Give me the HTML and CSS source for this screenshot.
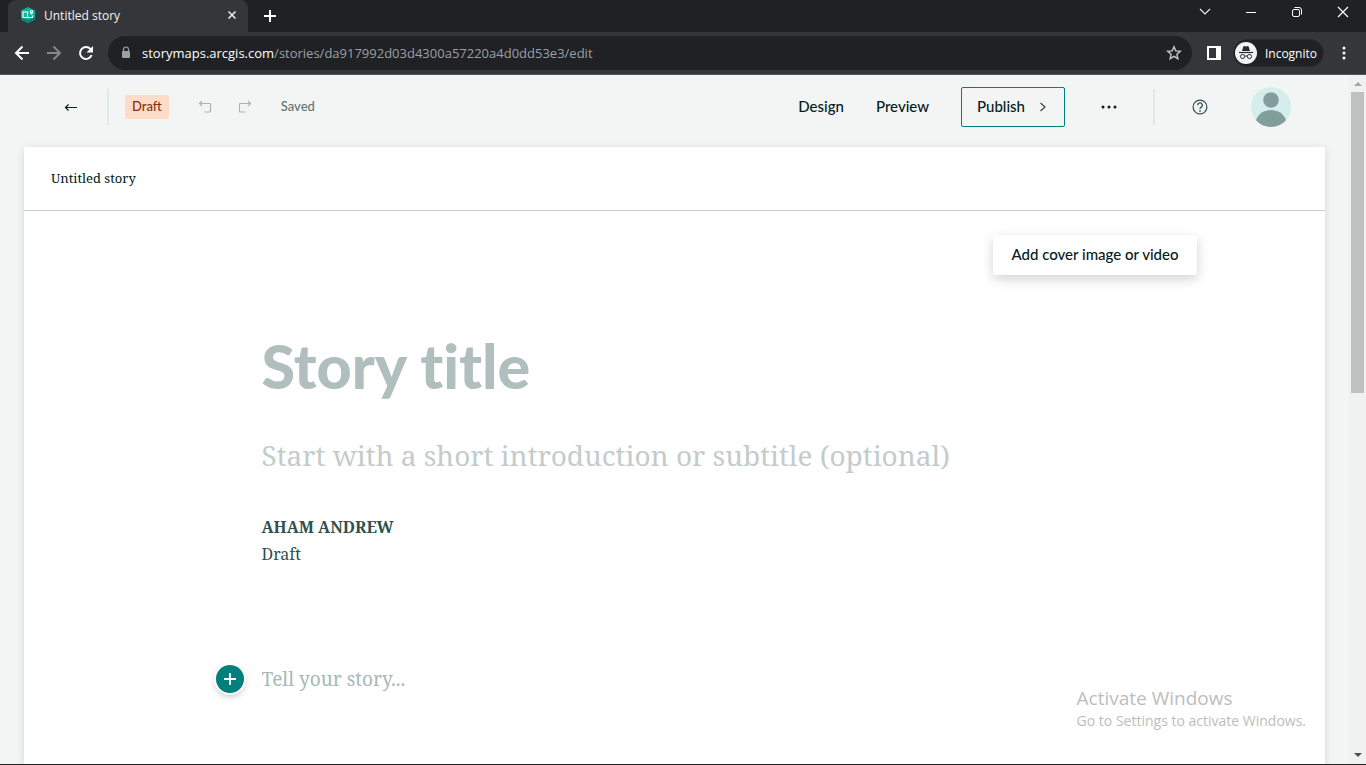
FILE: index.html
```html
<!DOCTYPE html>
<html lang="en">
<head>
<meta charset="utf-8">
<title>Untitled story</title>
<link rel="stylesheet" href="styles.css">
</head>
<body>
<div class="browser">
  <div class="tabstrip">
    <div class="tab">
      <svg class="favicon" width="16" height="16" viewBox="0 0 16 16"><path d="M8 0l7 3.500v9L8 16l-7-3.500v-9z" fill="#10b39e"/><path d="M1 10l7 3 7-3v2.500L8 16l-7-3.500z" fill="#078575"/><path d="M8.500 5H3v5.500h9.500V8.500M7.500 5v5.500" fill="none" stroke="#fff" stroke-width="1.100"/><path d="M11.500 3a1.700 1.700 0 0 1 1.700 1.700c0 1.200-1.700 3-1.700 3s-1.700-1.800-1.700-3A1.700 1.700 0 0 1 11.500 3z" fill="#fff"/><circle cx="11.500" cy="4.700" r=".6" fill="#10b39e"/></svg>
      <span class="tab-name">Untitled story</span>
      <button class="icon-btn tab-close" aria-label="Close tab"><svg width="10" height="10" viewBox="0 0 10 10"><path d="M1.500 1.500l7 7m0-7l-7 7" stroke="#e8eaed" stroke-width="1.600"/></svg></button>
    </div>
    <button class="icon-btn new-tab" aria-label="New tab"><svg width="12" height="12" viewBox="0 0 12 12"><path d="M6 0v12M0 6h12" stroke="#fff" stroke-width="2"/></svg></button>
    <div class="window-controls">
      <button class="icon-btn" aria-label="Search tabs"><svg width="12" height="12" viewBox="0 0 12 12"><path d="M1 3l5 5 5-5" fill="none" stroke="#e8eaed" stroke-width="1.200"/></svg></button>
      <button class="icon-btn" aria-label="Minimize"><svg width="12" height="12" viewBox="0 0 12 12"><path d="M1 6.500h10" stroke="#fff"/></svg></button>
      <button class="icon-btn" aria-label="Restore"><svg width="12" height="12" viewBox="0 0 12 12"><rect x="1.500" y="3.500" width="7" height="7" rx="1.500" fill="none" stroke="#fff"/><path d="M3.500 1.500H8a2.500 2.500 0 0 1 2.500 2.500v4.500" fill="none" stroke="#fff"/></svg></button>
      <button class="icon-btn" aria-label="Close"><svg width="12" height="12" viewBox="0 0 12 12"><path d="M1 1l10 10m0-10L1 11" stroke="#fff" stroke-width="1.200"/></svg></button>
    </div>
  </div>
  <div class="toolbar">
    <button class="icon-btn nav-btn" aria-label="Back"><svg width="16" height="16" viewBox="0 0 16 16"><path d="M15 8H2m6.500-6.500L2 8l6.500 6.500" fill="none" stroke="#fff" stroke-width="2"/></svg></button>
    <button class="icon-btn nav-btn" aria-label="Forward"><svg width="16" height="16" viewBox="0 0 16 16"><path d="M1 8h13M7.500 1.500L14 8l-6.500 6.500" fill="none" stroke="#85868a" stroke-width="2"/></svg></button>
    <button class="icon-btn nav-btn" aria-label="Reload"><svg width="16" height="16" viewBox="0 0 16 16"><path d="M13.600 10.200A6 6 0 1 1 12.400 3.900L14 5.500" fill="none" stroke="#fff" stroke-width="2"/><path d="M15 1v6.500H8.500z" fill="#fff"/></svg></button>
    <div class="address">
      <svg width="12" height="14" viewBox="0 0 12 14"><rect x="2" y="5" width="8" height="7" rx="1" fill="#9aa0a6"/><path d="M3.500 5.500V3.500a2.500 2.500 0 0 1 5 0v2" fill="none" stroke="#9aa0a6" stroke-width="1.200"/></svg>
      <span class="url" role="textbox" aria-label="Address"><span class="url-host">storymaps.arcgis.com</span>/stories/da917992d03d4300a57220a4d0dd53e3/edit</span>
      <button class="icon-btn" aria-label="Bookmark"><svg width="16" height="16" viewBox="0 0 16 16"><path d="M8 1.800l1.800 4.100 4.500.4-3.400 3 1 4.400L8 11.400l-3.900 2.300 1-4.400-3.400-3 4.500-.4z" fill="none" stroke="#c4c7ca" stroke-width="1.400"/></svg></button>
    </div>
    <button class="icon-btn panel-btn" aria-label="Side panel"><svg width="14" height="14" viewBox="0 0 14 14"><path fill-rule="evenodd" d="M0 0h14v14H0zM2 2v10h7V2z" fill="#fff"/></svg></button>
    <button class="incognito"><svg width="22" height="22" viewBox="0 0 22 22"><circle cx="11" cy="11" r="11" fill="#f1f3f4"/><path d="M7 9l1.400-4.600q.2-.6.800-.4l1.800.5 1.800-.5q.6-.2.800.4L15 9z" fill="#292a2d"/><path d="M4 10.500h14" stroke="#292a2d" stroke-width="1.200"/><circle cx="7.600" cy="14.500" r="2.100" fill="none" stroke="#292a2d"/><circle cx="14.400" cy="14.500" r="2.100" fill="none" stroke="#292a2d"/><path d="M9.700 14.300q1.300-.8 2.600 0" fill="none" stroke="#292a2d"/></svg><span>Incognito</span></button>
    <button class="icon-btn menu-btn" aria-label="Menu"><svg width="4" height="14" viewBox="0 0 4 14" fill="#fff"><circle cx="2" cy="2" r="1.500"/><circle cx="2" cy="7" r="1.500"/><circle cx="2" cy="12" r="1.500"/></svg></button>
  </div>
  <div class="viewport">
    <main class="page">
      <header class="editor-bar">
        <a class="back" href="#" aria-label="Back to stories"><svg width="14" height="8" viewBox="0 0 14 8"><path d="M13 4.500H2" stroke="#022020"/><path d="M4.500 1.500L1.500 4.500l3 3" fill="none" stroke="#022020" stroke-width="1.200"/></svg></a>
        <div class="status">
          <span class="badge">Draft</span>
          <button class="icon-btn" aria-label="Undo"><svg width="14" height="14" viewBox="0 0 14 14"><path d="M4 1L1.500 3.500 4 6M1.500 3.500H12a.5.5 0 0 1 .5.5v7a1 1 0 0 1-1 1H6.500" fill="none" stroke="#a3b8b6" stroke-width="1.200"/></svg></button>
          <button class="icon-btn" aria-label="Redo"><svg width="14" height="14" viewBox="0 0 14 14"><path d="M10 1l2.500 2.500L10 6M12.500 3.500H2a.5.5 0 0 0-.5.5v7a1 1 0 0 0 1 1H7.500" fill="none" stroke="#a3b8b6" stroke-width="1.200"/></svg></button>
          <span class="saved">Saved</span>
        </div>
        <div class="actions">
          <button class="text-btn">Design</button>
          <button class="text-btn">Preview</button>
          <button class="publish"><span class="text-btn">Publish</span><svg width="8" height="10" viewBox="0 0 8 10"><path d="M1.500 1L6 5 1.500 9" fill="none" stroke="#304f4e" stroke-width="1.300"/></svg></button>
          <button class="icon-btn more" aria-label="More actions"><svg width="16" height="4" viewBox="0 0 16 4" fill="#022020"><circle cx="2" cy="2" r="1.500"/><circle cx="8" cy="2" r="1.500"/><circle cx="14" cy="2" r="1.500"/></svg></button>
        </div>
        <div class="account">
          <button class="icon-btn" aria-label="Help"><svg width="16" height="16" viewBox="0 0 16 16"><circle cx="8" cy="8" r="6.900" fill="none" stroke="#304f4e" stroke-width="1.200"/><path d="M5.700 6.300a2.300 2.300 0 1 1 3.300 2.000Q8 8.800 8 9.900" fill="none" stroke="#304f4e" stroke-width="1.300"/><circle cx="8" cy="11.900" r=".9" fill="#304f4e"/></svg></button>
          <button class="icon-btn" aria-label="Profile"><svg width="40" height="40" viewBox="0 0 40 40"><circle cx="20" cy="20" r="20" fill="#d5eeed"/><circle cx="20" cy="13" r="7.800" fill="#829e9c"/><path d="M5 33.200C7.500 26.500 13 23 20 23s12.500 3.500 15 10.200A20 20 0 0 1 5 33.200z" fill="#829e9c"/></svg></button>
        </div>
      </header>
      <article class="sheet">
        <div class="sheet-head">Untitled story</div>
        <div class="cover-row"><button class="cover-btn">Add cover image or video</button></div>
        <div class="story">
          <input class="field title" aria-label="Story title" placeholder="Story title">
          <input class="field subtitle" aria-label="Subtitle" placeholder="Start with a short introduction or subtitle (optional)">
          <div class="byline"><strong>AHAM ANDREW</strong><span>Draft</span></div>
          <div class="block">
            <button class="add" aria-label="Add content block"><svg width="12" height="12" viewBox="0 0 12 12"><path d="M6 0v12M0 6h12" stroke="#fff" stroke-width="1.800"/></svg></button>
            <input class="field body" aria-label="Story text" placeholder="Tell your story...">
          </div>
        </div>
      </article>
    </main>
    <div class="scrollbar">
      <svg width="8" height="4" viewBox="0 0 8 4"><path d="M4 0l4 4H0z" fill="#a3a3a3"/></svg>
      <div class="track"><div class="thumb"></div></div>
      <svg width="8" height="4" viewBox="0 0 8 4"><path d="M0 0h8L4 4z" fill="#505050"/></svg>
    </div>
    <div class="watermark"><p class="watermark-head">Activate Windows</p><p>Go to Settings to activate Windows.</p></div>
  </div>
</div>
</body>
</html>
```
FILE: styles.css
```css
* { box-sizing: border-box; }
body { margin: 0; font-family: Lato, sans-serif; color: #022020; }
button, input { font: inherit; color: inherit; border: 0; background: none; padding: 0; margin: 0; }
button { cursor: pointer; }
svg { display: block; flex: none; }
p { margin: 0; }
.icon-btn { display: flex; align-items: center; justify-content: center; flex: none; }

.browser { height: 100vh; display: flex; flex-direction: column; overflow: hidden; border-bottom: 1px solid #202124; font-family: "Open Sans", sans-serif; }
.tabstrip { display: flex; align-items: center; height: 32px; flex: none; padding-left: 8px; background: #202124; }
.tab { display: flex; align-items: center; gap: 8px; width: 240px; height: 32px; padding: 0 11px 2px 12px; background: #35363a; border-radius: 8px 8px 0 0; font-size: 12px; color: #f1f3f4; }
.tab-name { flex: 1; }
.tab-close { width: 10px; height: 16px; }
.new-tab { width: 28px; height: 28px; margin-left: 8px; }
.window-controls { display: flex; margin-left: auto; padding-bottom: 8px; }
.window-controls .icon-btn { width: 46px; height: 24px; }

.toolbar { display: flex; align-items: center; height: 43px; flex: none; padding: 0 20px 0 6px; background: #35363a; border-bottom: 1px solid #55565a; }
.nav-btn { width: 32px; height: 32px; }
.address { display: flex; align-items: center; gap: 10px; flex: 1; height: 34px; margin-left: 6px; padding: 0 10px 0 12px; border-radius: 17px; background: #202124; color: #9aa0a6; font-size: 13px; }
.url { flex: 1; white-space: nowrap; overflow: hidden; }
.url-host { color: #fff; }
.panel-btn { margin: 0 12px 0 15px; }
.incognito { display: flex; align-items: center; gap: 8px; height: 28px; padding: 0 6px 0 1px; border-radius: 14px; background: #202124; border: 1px solid #292a2d; color: #fff; font-size: 12px; }
.menu-btn { margin-left: 18px; }

.viewport { position: relative; display: flex; flex: 1; min-height: 0; }
.page { flex: 1; display: flex; flex-direction: column; padding: 0 24px; background: #f3f5f4; font-family: Lato, sans-serif; }
.editor-bar { display: flex; align-items: center; height: 72px; flex: none; padding: 0 34px 8px 35px; font-size: 15px; font-weight: 500; }
.back { display: flex; align-items: center; width: 48px; height: 36px; padding-left: 5px; }
.status { display: flex; align-items: center; gap: 26px; height: 36px; padding-left: 16px; border-left: 2px solid #dfe8e6; font-size: 13px; color: #5c7775; }
.badge { height: 24px; margin-right: 3px; padding: 0 7px; border-radius: 2px; background: #ffdcc7; color: #8a3110; line-height: 22px; }
.saved { margin-left: 3px; padding-bottom: 3px; }
.actions { display: flex; align-items: center; gap: 32px; margin-left: auto; padding-right: 32px; }
.text-btn { padding-bottom: 2px; }
.publish { display: flex; align-items: center; gap: 14px; height: 40px; padding: 0 17px 0 15px; border: 1px solid #00807c; border-radius: 2px; }
.more { width: 24px; height: 24px; }
.account { display: flex; align-items: center; gap: 43px; height: 36px; padding-left: 37px; border-left: 2px solid #dfe8e6; }

.sheet { flex: 1; min-height: 0; background: #fff; box-shadow: 0 2px 8px rgba(0, 0, 0, .12); font-family: "Noto Serif", "DejaVu Serif", serif; }
.sheet-head { height: 64px; padding: 0 27px; border-bottom: 1px solid #c3d3d1; font-size: 13px; line-height: 62px; }
.cover-row { display: flex; justify-content: flex-end; padding: 24px 128px 0; }
.cover-btn { min-width: 204px; height: 40px; padding: 0 16px 3px; border-radius: 2px; background: #fff; box-shadow: 0 4px 12px rgba(0, 0, 0, .18); font-family: Lato, sans-serif; font-size: 15px; font-weight: 500; }
.story { max-width: 826px; margin: 0 auto; }
.field { display: block; width: 100%; outline: 0; }
.field::placeholder { opacity: 1; }
.title { height: 72px; margin-top: 54px; font-family: Lato, sans-serif; font-size: 61px; font-weight: 900; font-variant-ligatures: none; }
.title::placeholder { color: #b0bfbd; }
.subtitle { height: 44px; margin-top: 32px; font-size: 28px; }
.subtitle::placeholder { color: #c2cdcb; }
.byline { display: flex; flex-direction: column; margin-top: 37px; color: #304f4e; font-size: 16px; line-height: 27px; }
.block { display: flex; align-items: center; gap: 18px; margin: 96px 0 0 -46px; }
.add { display: flex; align-items: center; justify-content: center; width: 28px; height: 28px; flex: none; border-radius: 50%; background: #00807c; box-shadow: 0 0 0 2px #fff, 0 3px 6px 1px rgba(0, 0, 0, .2); }
.body { height: 30px; font-size: 19px; }
.body::placeholder { color: #a6b9b7; }

.scrollbar { display: flex; flex-direction: column; align-items: center; width: 17px; flex: none; padding: 7px 0; background: #f1f1f1; }
.track { flex: 1; width: 13px; margin: 6px 0; }
.thumb { height: 46%; background: #c1c1c1; }
.watermark { position: absolute; right: 60px; bottom: 33px; color: #bdbdbd; font-size: 14px; line-height: 20px; }
.watermark-head { font-size: 19px; line-height: 25px; }
```
